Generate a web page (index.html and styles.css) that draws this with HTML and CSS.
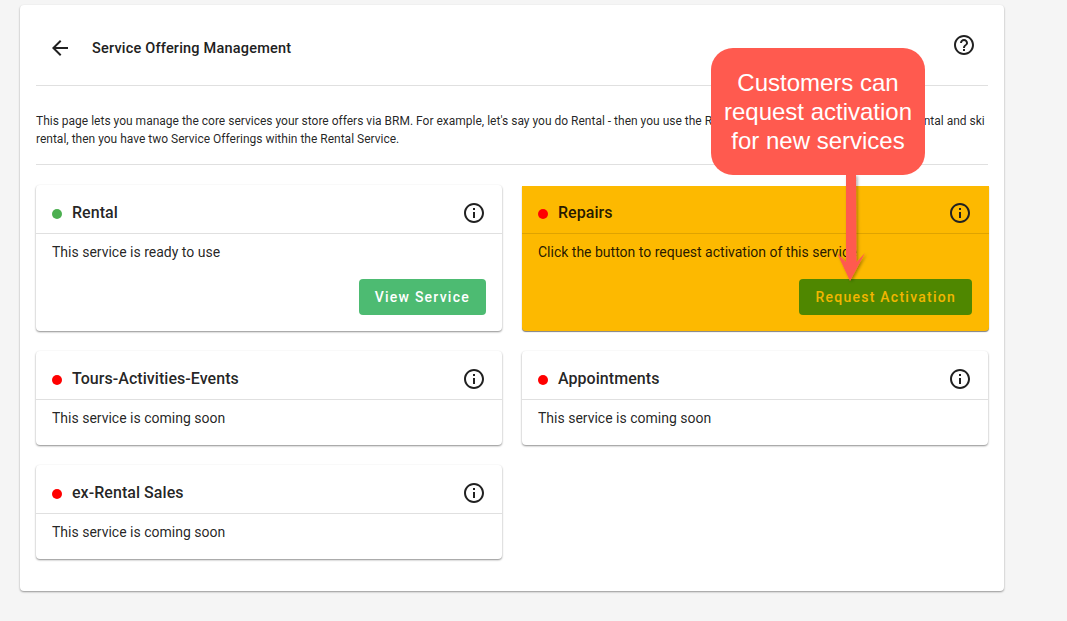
FILE: index.html
```html
<!DOCTYPE html>
<html lang="en">
<head>
<meta charset="utf-8">
<title>Service Offering Management</title>
<link rel="stylesheet" href="styles.css">
</head>
<body>
<main class="panel">
  <header class="top">
    <svg class="back" viewBox="0 0 24 24" width="24" height="24"><path d="M20 11H7.830l5.590-5.590L12 4l-8 8 8 8 1.410-1.410L7.830 13H20z"/></svg>
    <h1 class="page-title">Service Offering Management</h1>
    <svg class="help" viewBox="0 0 24 24" width="24" height="24"><path d="M11 18h2v-2h-2v2zm1-16C6.480 2 2 6.480 2 12s4.480 10 10 10 10-4.480 10-10S17.520 2 12 2zm0 18c-4.410 0-8-3.590-8-8s3.590-8 8-8 8 3.590 8 8-3.590 8-8 8zm0-14c-2.210 0-4 1.790-4 4h2c0-1.100.9-2 2-2s2 .9 2 2c0 2-3 1.750-3 5h2c0-2.250 3-2.500 3-5 0-2.210-1.790-4-4-4z"/></svg>
  </header>
  <p class="intro">This page lets you manage the core services your store offers via BRM. For example, let's say you do Rental - then you use the Rental Service. If you provide both bike rental and ski rental, then you have two Service Offerings within the Rental Service.</p>
  <section class="grid">
    <article class="card">
      <div class="card-head"><span class="dot green"></span><h2 class="card-title">Rental</h2><svg class="info" viewBox="0 0 24 24" width="24" height="24"><path d="M11 7h2v2h-2zm0 4h2v6h-2zm1-9C6.480 2 2 6.480 2 12s4.480 10 10 10 10-4.480 10-10S17.520 2 12 2zm0 18c-4.410 0-8-3.590-8-8s3.590-8 8-8 8 3.590 8 8-3.590 8-8 8z"/></svg></div>
      <div class="card-body"><p class="card-text">This service is ready to use</p><div class="actions"><button class="btn btn-view">View Service</button></div></div>
    </article>
    <article class="card card-hl">
      <div class="card-head"><span class="dot red"></span><h2 class="card-title">Repairs</h2><svg class="info" viewBox="0 0 24 24" width="24" height="24"><path d="M11 7h2v2h-2zm0 4h2v6h-2zm1-9C6.480 2 2 6.480 2 12s4.480 10 10 10 10-4.480 10-10S17.520 2 12 2zm0 18c-4.410 0-8-3.590-8-8s3.590-8 8-8 8 3.590 8 8-3.590 8-8 8z"/></svg></div>
      <div class="card-body"><p class="card-text">Click the button to request activation of this service</p><div class="actions"><button class="btn btn-request">Request Activation</button></div></div>
    </article>
    <article class="card">
      <div class="card-head"><span class="dot red"></span><h2 class="card-title">Tours-Activities-Events</h2><svg class="info" viewBox="0 0 24 24" width="24" height="24"><path d="M11 7h2v2h-2zm0 4h2v6h-2zm1-9C6.480 2 2 6.480 2 12s4.480 10 10 10 10-4.480 10-10S17.520 2 12 2zm0 18c-4.410 0-8-3.590-8-8s3.590-8 8-8 8 3.590 8 8-3.590 8-8 8z"/></svg></div>
      <div class="card-body"><p class="card-text">This service is coming soon</p></div>
    </article>
    <article class="card">
      <div class="card-head"><span class="dot red"></span><h2 class="card-title">Appointments</h2><svg class="info" viewBox="0 0 24 24" width="24" height="24"><path d="M11 7h2v2h-2zm0 4h2v6h-2zm1-9C6.480 2 2 6.480 2 12s4.480 10 10 10 10-4.480 10-10S17.520 2 12 2zm0 18c-4.410 0-8-3.590-8-8s3.590-8 8-8 8 3.590 8 8-3.590 8-8 8z"/></svg></div>
      <div class="card-body"><p class="card-text">This service is coming soon</p></div>
    </article>
    <article class="card">
      <div class="card-head"><span class="dot red"></span><h2 class="card-title">ex-Rental Sales</h2><svg class="info" viewBox="0 0 24 24" width="24" height="24"><path d="M11 7h2v2h-2zm0 4h2v6h-2zm1-9C6.480 2 2 6.480 2 12s4.480 10 10 10 10-4.480 10-10S17.520 2 12 2zm0 18c-4.410 0-8-3.590-8-8s3.590-8 8-8 8 3.590 8 8-3.590 8-8 8z"/></svg></div>
      <div class="card-body"><p class="card-text">This service is coming soon</p></div>
    </article>
  </section>
</main>
<svg class="arrow" viewBox="0 0 40 120" width="40" height="120"><defs><filter id="arrow-shadow" x="-40%" y="-10%" width="180%" height="120%"><feDropShadow dx="1.500" dy="1" stdDeviation="1.500" flood-color="#000" flood-opacity=".35"/></filter></defs><path class="arrow-shape" filter="url(#arrow-shadow)" d="M9 0h10l.5 87 8.500-9-15 28L0 78l9 9z"/></svg>
<aside class="callout">Customers can request activation for new services</aside>
</body>
</html>
```

FILE: styles.css
```css
* { box-sizing: border-box; }
html, body { margin: 0; height: 100%; }
body {
  background: #f5f5f5;
  padding: 5px 63px 0 20px;
  font-family: Roboto, "Liberation Sans", sans-serif;
  color: rgba(0, 0, 0, .87);
  overflow: hidden;
}
.panel {
  height: 586px;
  padding: 0 16px;
  background: #fff;
  border-radius: 4px;
  box-shadow: 0 1px 2px rgba(0, 0, 0, .4);
}
.top {
  height: 81px;
  display: flex;
  align-items: center;
  padding: 6px 12px 0 12px;
  border-bottom: 1px solid #e0e0e0;
}
.back { fill: #212121; flex: none; }
.page-title {
  margin: 2px 0 0 20px;
  flex: 1;
  font-size: 14.5px;
  font-weight: 500;
  line-height: 20px;
  letter-spacing: .2px;
  color: #212121;
}
.help { fill: #212121; flex: none; margin: -6px 0 0 0; }
.intro {
  margin: 0;
  height: 79px;
  padding-top: 26px;
  font-size: 12px;
  line-height: 18px;
  letter-spacing: 0;
  border-bottom: 1px solid #e0e0e0;
}
.grid {
  margin-top: 20px;
  display: grid;
  grid-template-columns: 466px 466px;
  column-gap: 20px;
  row-gap: 20px;
  align-items: start;
}
.card {
  background: #fff;
  border-radius: 4px;
  box-shadow: 0 1px 2px rgba(0, 0, 0, .45);
}
.card-head {
  height: 49px;
  display: flex;
  align-items: center;
  padding: 8px 16px 0;
  border-bottom: 1px solid #e0e0e0;
}
.dot { width: 10px; height: 10px; border-radius: 50%; flex: none; margin-top: 2px; }
.green { background: #4caf50; }
.red { background: #f00; }
.card-title {
  margin: 0 0 0 10px;
  flex: 1;
  font-size: 16px;
  font-weight: 500;
  line-height: 24px;
  letter-spacing: .05px;
}
.info { fill: #212121; flex: none; }
.card-body { padding: 8px 16px 16px; }
.card-text {
  margin: 0;
  padding-bottom: 1px;
  font-size: 14px;
  line-height: 20px;
  letter-spacing: 0;
}
.actions { display: flex; justify-content: flex-end; margin-top: 16px; }
.btn {
  height: 36px;
  padding: 0 16px;
  border: 0;
  border-radius: 4px;
  font-family: inherit;
  font-size: 14px;
  font-weight: 500;
  letter-spacing: 1.25px;
}
.btn-view { background: #4dbb72; color: #fff; }
.card-hl {
  margin: 1px -1px 0 0;
  background: #fdb900;
  border-radius: 0 0 4px 4px;
  box-shadow: 0 1px 1px rgba(0, 0, 0, .5);
}
.card-hl .card-head { height: 48px; padding-top: 7px; padding-right: 17px; border-bottom-color: #dfa300; }
.card-hl .card-body { padding-right: 17px; }
.btn-request { background: #4f8700; color: #f2b600; }
.callout {
  position: absolute;
  left: 711px;
  top: 48px;
  width: 214px;
  height: 127px;
  padding: 20px 10px 0;
  background: #ff5a4f;
  border-radius: 22px;
  color: #fff;
  font-family: "Liberation Sans", sans-serif;
  font-size: 24px;
  line-height: 29px;
  text-align: center;
}
.arrow { position: absolute; left: 837px; top: 175px; overflow: visible; }
.arrow-shape { fill: #ff5a4f; }
```
